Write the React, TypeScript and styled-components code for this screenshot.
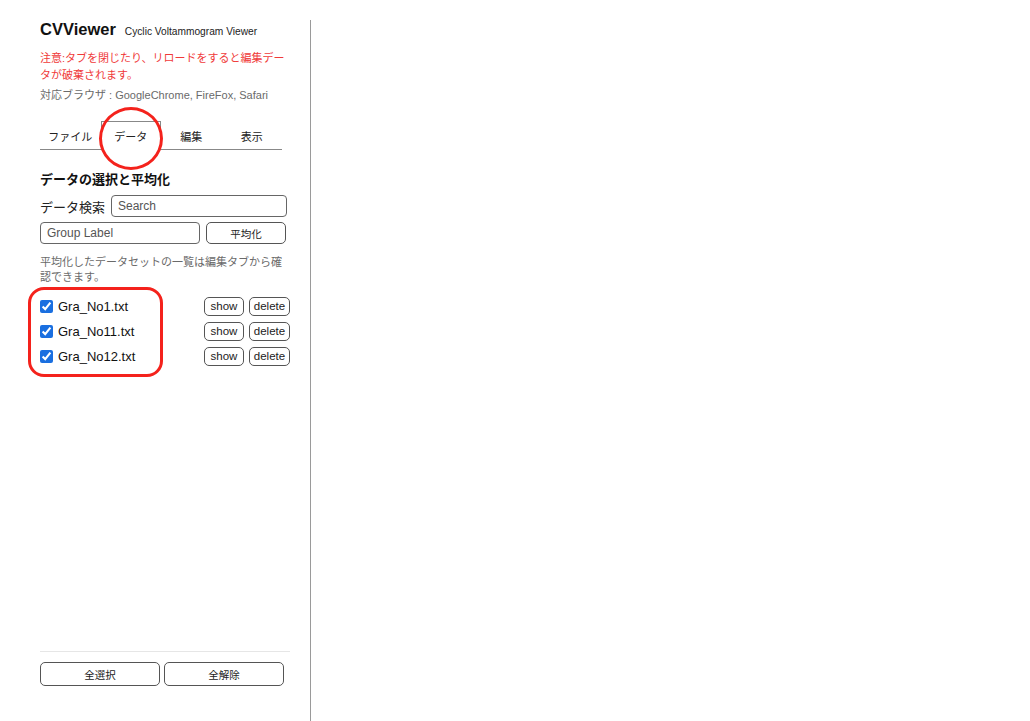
import React from "react";
import styled, { createGlobalStyle } from "styled-components";

const Global = createGlobalStyle`
  html, body { margin: 0; padding: 0; background: #fff; }
  body { font-family: "Liberation Sans", Arial, "Noto Sans CJK JP", sans-serif; color: #222; }
  * { box-sizing: border-box; }
`;

const Page = styled.div`
  display: flex;
  padding-top: 20px;
  height: 721px;
`;

const Sidebar = styled.aside`
  position: relative;
  width: 311px;
  height: 100%;
  padding: 0 20px 35px 40px;
  border-right: 1px solid #9a9a9a;
  display: flex;
  flex-direction: column;
`;

const TitleRow = styled.div`
  display: flex;
  align-items: baseline;
  gap: 9px;
  height: 20px;
`;

const Title = styled.h1`
  margin: 0;
  font-size: 16.5px;
  font-weight: 700;
  color: #111;
`;

const Subtitle = styled.span`
  font-size: 10.2px;
  color: #222;
`;

const Warning = styled.p`
  margin: 10px 0 0;
  font-size: 11px;
  line-height: 17px;
  color: #f03a3a;
`;

const Note = styled.p<{ $mt?: number }>`
  margin: ${(p) => p.$mt ?? 0}px 0 0;
  font-size: 11px;
  line-height: 15px;
  color: #6a6a6a;
`;

const Tabs = styled.div`
  display: flex;
  width: 242px;
  margin-top: 18px;
  border-bottom: 1px solid #888;
  height: 29px;
`;

const Tab = styled.div<{ $active?: boolean }>`
  flex: 1;
  display: flex;
  align-items: center;
  justify-content: center;
  font-size: 11px;
  color: #222;
  border: 1px solid ${(p) => (p.$active ? "#888" : "transparent")};
  border-bottom: none;
  margin-bottom: ${(p) => (p.$active ? "-1px" : "0")};
  background: #fff;
  height: ${(p) => (p.$active ? "29px" : "28px")};
`;

const Heading = styled.h2`
  margin: 22px 0 0;
  font-size: 13px;
  font-weight: 700;
  color: #111;
  line-height: 16px;
`;

const Row = styled.div<{ $mt: number }>`
  display: flex;
  align-items: center;
  gap: 6px;
  margin-top: ${(p) => p.$mt}px;
`;

const Label = styled.span`
  font-size: 13px;
  color: #222;
`;

const Input = styled.input<{ $w: number }>`
  width: ${(p) => p.$w}px;
  height: 22px;
  border: 1px solid #666;
  border-radius: 4px;
  padding: 0 6px;
  font-size: 12px;
  font-family: inherit;
  &::placeholder { color: #555; }
`;

const Button = styled.button<{ $w: number; $h: number }>`
  width: ${(p) => p.$w}px;
  height: ${(p) => p.$h}px;
  border: 1px solid #555;
  border-radius: 5px;
  background: #fff;
  font-size: 10.5px;
  color: #222;
  font-family: inherit;
  padding: 0;
`;

const List = styled.ul`
  list-style: none;
  margin: 11px 0 0;
  padding: 0;
  display: flex;
  flex-direction: column;
  gap: 5px;
  width: 250px;
`;

const Item = styled.li`
  display: flex;
  align-items: center;
  height: 20px;
`;

const Check = styled.input`
  width: 13px;
  height: 13px;
  margin: 0 5px 0 0;
  accent-color: #1a6fe0;
`;

const FileName = styled.span`
  font-size: 13px;
  color: #111;
  flex: 1;
`;

const SmallButton = styled.button<{ $w: number }>`
  width: ${(p) => p.$w}px;
  height: 19px;
  border: 1px solid #555;
  border-radius: 5px;
  background: #fff;
  font-size: 11.5px;
  color: #222;
  font-family: inherit;
  padding: 0;
  margin-left: 5px;
`;

const Spacer = styled.div`
  flex: 1;
`;

const Footer = styled.div`
  border-top: 1px solid #e6e6e6;
  width: 250px;
  padding-top: 10px;
  display: flex;
  gap: 4px;
`;

const Circle = styled.div`
  position: absolute;
  left: 99px;
  top: 87px;
  width: 64px;
  height: 63px;
  border: 3px solid #f4221c;
  border-radius: 50%;
  pointer-events: none;
`;

const Frame = styled.div`
  position: absolute;
  left: 28px;
  top: 267px;
  width: 135px;
  height: 90px;
  border: 3px solid #f4221c;
  border-radius: 16px;
  pointer-events: none;
`;

const files = ["Gra_No1.txt", "Gra_No11.txt", "Gra_No12.txt"];

export default function App() {
  return (
    <>
      <Global />
      <Page>
        <Sidebar>
          <TitleRow>
            <Title>CVViewer</Title>
            <Subtitle>Cyclic Voltammogram Viewer</Subtitle>
          </TitleRow>
          <Warning>注意:タブを閉じたり、リロードをすると編集データが破棄されます。</Warning>
          <Note $mt={4}>対応ブラウザ : GoogleChrome, FireFox, Safari</Note>
          <Tabs>
            <Tab>ファイル</Tab>
            <Tab $active>データ</Tab>
            <Tab>編集</Tab>
            <Tab>表示</Tab>
          </Tabs>
          <Heading>データの選択と平均化</Heading>
          <Row $mt={7}>
            <Label>データ検索</Label>
            <Input $w={176} placeholder="Search" />
          </Row>
          <Row $mt={5}>
            <Input $w={160} placeholder="Group Label" />
            <Button $w={80} $h={22}>平均化</Button>
          </Row>
          <Note $mt={11}>平均化したデータセットの一覧は編集タブから確認できます。</Note>
          <List>
            {files.map((f) => (
              <Item key={f}>
                <Check type="checkbox" defaultChecked />
                <FileName>{f}</FileName>
                <SmallButton $w={40}>show</SmallButton>
                <SmallButton $w={41}>delete</SmallButton>
              </Item>
            ))}
          </List>
          <Spacer />
          <Footer>
            <Button $w={120} $h={24}>全選択</Button>
            <Button $w={120} $h={24}>全解除</Button>
          </Footer>
          <Circle />
          <Frame />
        </Sidebar>
      </Page>
    </>
  );
}
